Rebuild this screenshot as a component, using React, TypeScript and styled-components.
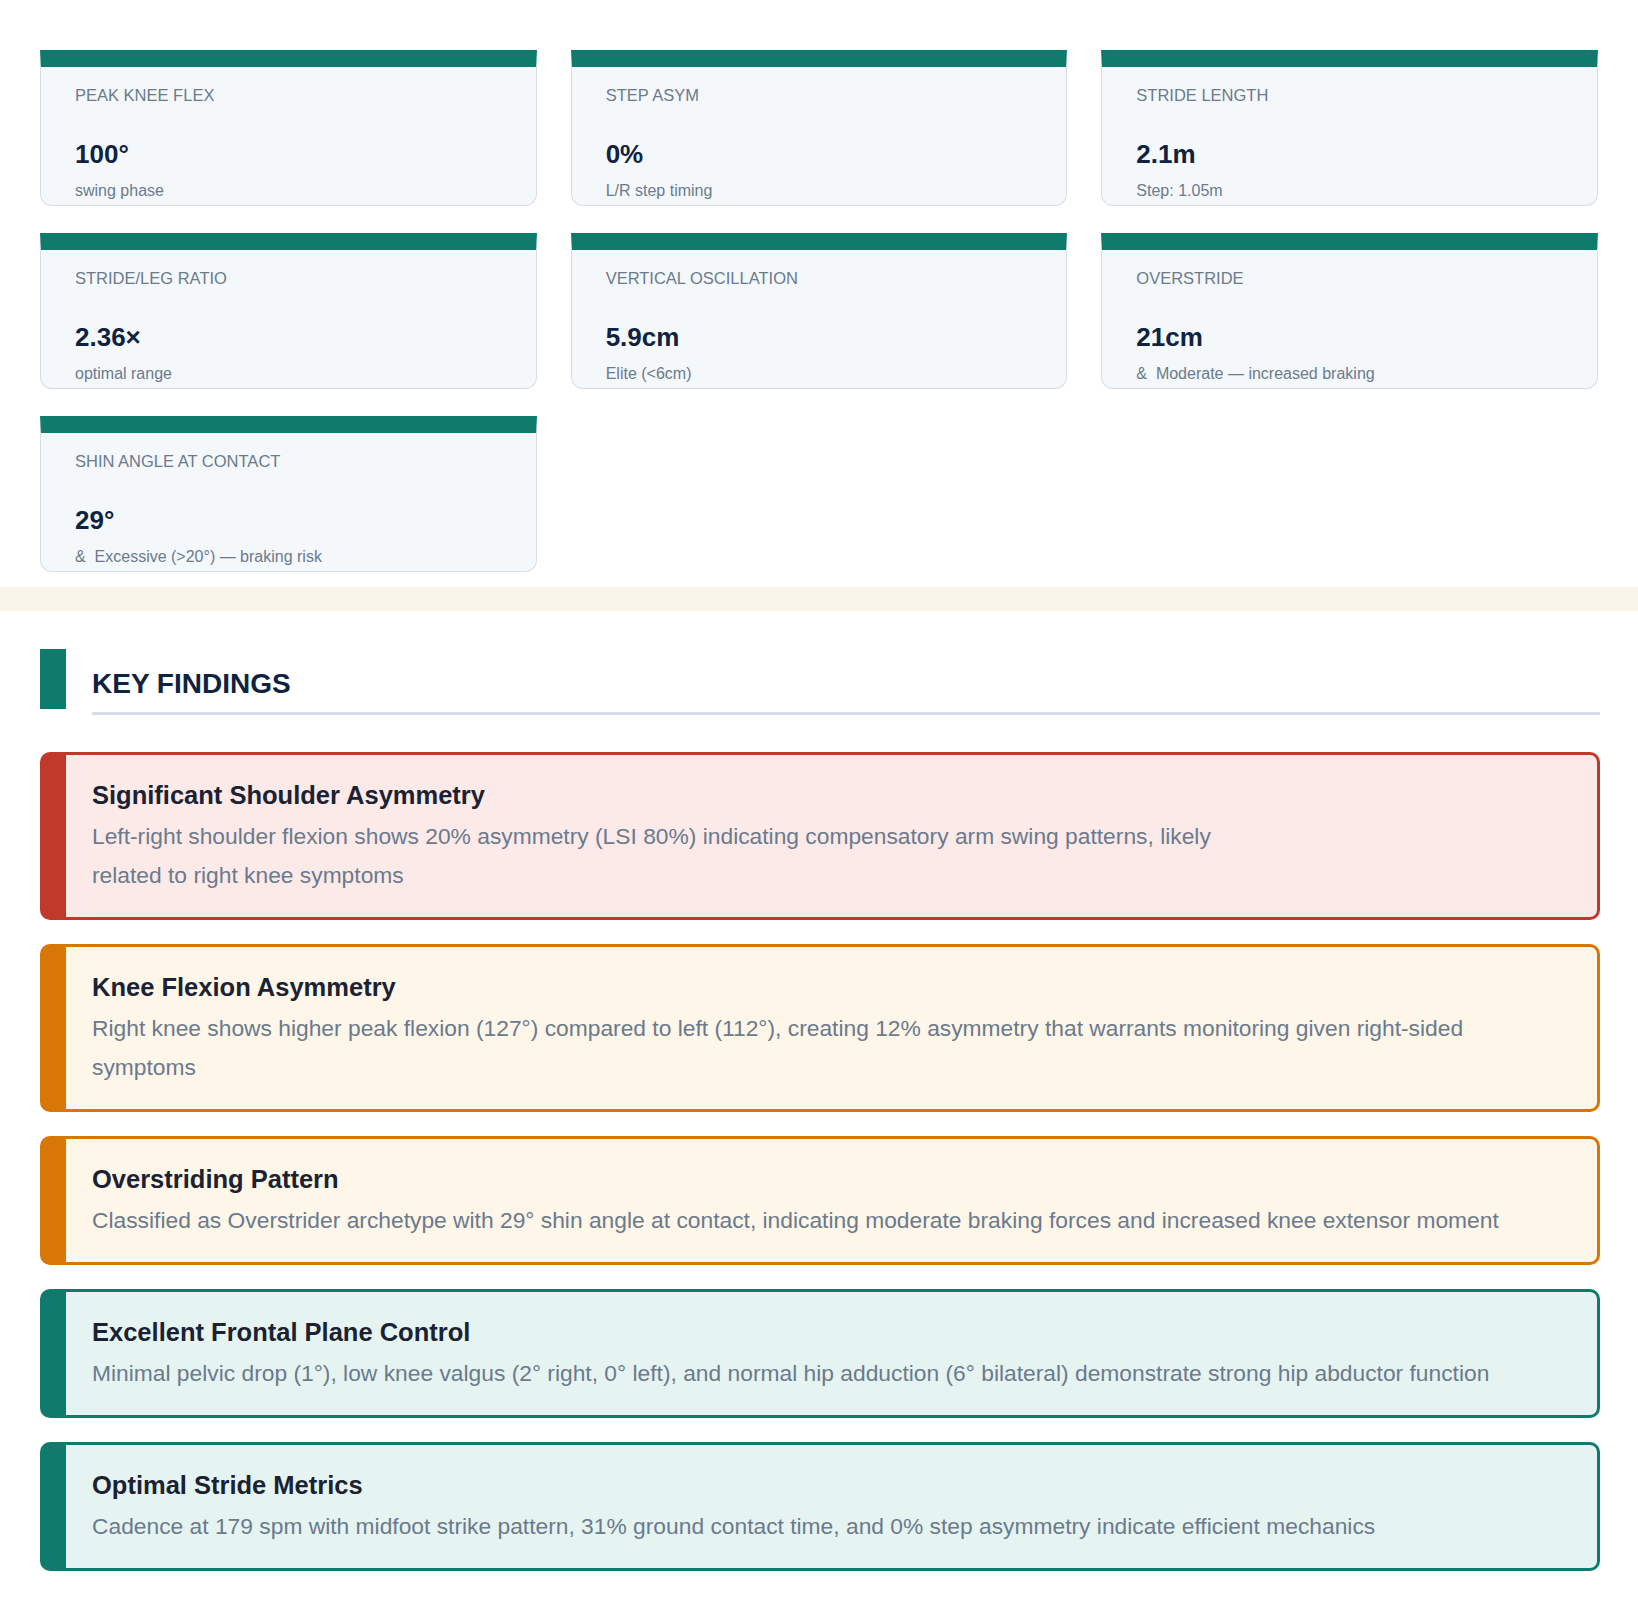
import React from "react";
import styled, { createGlobalStyle } from "styled-components";

const Global = createGlobalStyle`
  body { margin: 0; background: #fff; font-family: "Liberation Sans", Arial, sans-serif; }
`;

const Grid = styled.div`
  display: grid;
  grid-template-columns: repeat(3, 1fr);
  column-gap: 34px;
  row-gap: 27px;
  padding: 50px 40px 0;
`;
const Card = styled.div`
  background: #f4f8fb;
  border: 1.5px solid #d6dde7;
  border-top: 17px solid #0f7b6c;
  border-radius: 12px;
  border-top-left-radius: 0;
  border-top-right-radius: 0;
  padding: 18px 34px 4px;
  height: 156px;
  box-sizing: border-box;
`;
const Label = styled.div`
  font-family: "Liberation Sans", Arial, sans-serif;
  font-size: 16.5px; color: #6b7a8d; line-height: 20px; text-transform: uppercase;
`;
const Value = styled.div`
  font-family: "Liberation Sans", Arial, sans-serif;
  font-size: 26px; font-weight: 700; color: #0f2340; line-height: 32px; margin-top: 33px;
`;
const Sub = styled.div`
  font-family: "Liberation Sans", Arial, sans-serif;
  font-size: 16px; color: #6b7a8d; line-height: 20px; margin-top: 11px; white-space: pre;
`;
const Band = styled.div`
  height: 24px; background: #faf5ea; margin-top: 15px;
`;
const Section = styled.div`
  padding: 38px 38px 60px 40px;
`;
const Heading = styled.div`
  display: flex; align-items: stretch; gap: 26px; height: 66px;
`;
const HBar = styled.div`
  width: 26px; height: 60px; background: #0f7b6c;
`;
const HText = styled.h2`
  flex: 1; margin: 0; font-size: 28px; font-weight: 700; color: #0f2340;
  font-family: "Liberation Sans", Arial, sans-serif;
  border-bottom: 3px solid #d6dde7; display: flex; align-items: center; padding-top: 6px;
`;
const List = styled.div`
  display: flex; flex-direction: column; gap: 24px; margin-top: 37px;
`;
const tones = {
  red: { bg: "#fceae8", bd: "#c0392b" },
  orange: { bg: "#fef6e8", bd: "#d97706" },
  green: { bg: "#e6f4f1", bd: "#0f7b6c" },
};
type Tone = keyof typeof tones;
const Finding = styled.div<{ $tone: Tone }>`
  background: ${p => tones[p.$tone].bg};
  border: 3px solid ${p => tones[p.$tone].bd};
  border-left: 26px solid ${p => tones[p.$tone].bd};
  border-radius: 10px;
  padding: 25px 30px 22px 26px;
  font-family: "Liberation Sans", Arial, sans-serif;
`;
const FTitle = styled.div`
  font-size: 25.5px; font-weight: 700; color: #1a2233; line-height: 30px;
`;
const FBody = styled.div`
  font-size: 22.8px; color: #6b7a8d; line-height: 39px; margin-top: 7px;
`;

const cards = [
  ["Peak Knee Flex", "100°", "swing phase"],
  ["Step Asym", "0%", "L/R step timing"],
  ["Stride Length", "2.1m", "Step: 1.05m"],
  ["Stride/Leg Ratio", "2.36×", "optimal range"],
  ["Vertical Oscillation", "5.9cm", "Elite (<6cm)"],
  ["Overstride", "21cm", "&  Moderate — increased braking"],
  ["Shin Angle at Contact", "29°", "&  Excessive (>20°) — braking risk"],
];

const findings: [Tone, string, React.ReactNode][] = [
  ["red", "Significant Shoulder Asymmetry", <>Left-right shoulder flexion shows 20% asymmetry (LSI 80%) indicating compensatory arm swing patterns, likely<br />related to right knee symptoms</>],
  ["orange", "Knee Flexion Asymmetry", <>Right knee shows higher peak flexion (127°) compared to left (112°), creating 12% asymmetry that warrants monitoring given right-sided<br />symptoms</>],
  ["orange", "Overstriding Pattern", "Classified as Overstrider archetype with 29° shin angle at contact, indicating moderate braking forces and increased knee extensor moment"],
  ["green", "Excellent Frontal Plane Control", "Minimal pelvic drop (1°), low knee valgus (2° right, 0° left), and normal hip adduction (6° bilateral) demonstrate strong hip abductor function"],
  ["green", "Optimal Stride Metrics", "Cadence at 179 spm with midfoot strike pattern, 31% ground contact time, and 0% step asymmetry indicate efficient mechanics"],
];

export default function App() {
  return (
    <>
      <Global />
      <Grid>
        {cards.map(([l, v, s]) => (
          <Card key={l}>
            <Label>{l}</Label>
            <Value>{v}</Value>
            <Sub>{s}</Sub>
          </Card>
        ))}
      </Grid>
      <Band />
      <Section>
        <Heading>
          <HBar />
          <HText>KEY FINDINGS</HText>
        </Heading>
        <List>
          {findings.map(([t, title, body]) => (
            <Finding key={title} $tone={t}>
              <FTitle>{title}</FTitle>
              <FBody>{body}</FBody>
            </Finding>
          ))}
        </List>
      </Section>
    </>
  );
}
